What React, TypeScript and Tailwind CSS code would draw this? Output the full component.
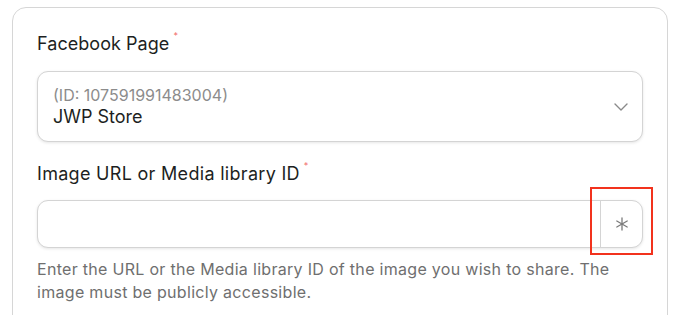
import React from "react";

const font = { fontFamily: "Inter, 'Noto Sans', sans-serif" };

const RequiredMark = () => (
  <span className="relative -top-[8px] ml-[4px] text-[9px] text-[#f26b6b]">*</span>
);

const ChevronDown = () => (
  <svg width="14" height="8" viewBox="0 0 14 8" fill="none">
    <path d="M1 1l6 6 6-6" stroke="#8a8a8a" strokeWidth="1.4" strokeLinecap="round" strokeLinejoin="round" />
  </svg>
);

const AsteriskIcon = () => (
  <svg width="14" height="14" viewBox="0 0 14 14" fill="none">
    <g stroke="#7a7a7a" strokeWidth="1.3" strokeLinecap="round">
      <path d="M7 1v12" />
      <path d="M1.8 4l10.4 6" />
      <path d="M1.8 10l10.4-6" />
    </g>
  </svg>
);

export default function App() {
  return (
    <div className="min-h-[315px] bg-white pt-[7px] pl-[12px] overflow-hidden" style={font}>
      <div className="w-[656px] rounded-[14px] border border-[#d6d6d6] bg-white px-[24px] pt-[24px] pb-10">
        {/* Facebook page select */}
        <label className="flex items-start text-[18px] leading-[24px] tracking-[0.05px] text-[#1d1f22]">
          Facebook Page
          <RequiredMark />
        </label>
        <div className="mt-[15px] flex h-[71px] items-center justify-between rounded-[11px] border border-[#d4d4d4] bg-white pl-[15px] pr-[14px] shadow-[0_1px_3px_rgba(0,0,0,0.1)]">
          <div className="flex flex-col">
            <span className="text-[16px] leading-[20px] text-[#8c8c8c]">(ID: 107591991483004)</span>
            <span className="text-[18px] leading-[23px] text-[#1d1f22]">JWP Store</span>
          </div>
          <ChevronDown />
        </div>

        {/* Image URL */}
        <label className="mt-[20px] flex items-start text-[18px] leading-[24px] tracking-[0.3px] text-[#1d1f22]">
          Image URL or Media library ID
          <RequiredMark />
        </label>
        <div className="relative mt-[14px]">
          <div className="flex h-[48px] rounded-[11px] border border-[#d4d4d4] bg-white shadow-[0_1px_3px_rgba(0,0,0,0.1)]">
            <input className="min-w-0 flex-1 bg-transparent px-[14px] text-[16px] outline-none" />
            <div className="flex w-[42px] items-center justify-center border-l border-[#d4d4d4]">
              <AsteriskIcon />
            </div>
          </div>
          <div className="absolute -top-[13px] -right-[10px] h-[68px] w-[63px] border-2 border-[#f2321d]" />
        </div>
        <p className="mt-[10px] text-[16px] leading-[23px] tracking-[0.3px] text-[#6f6f6f]">
          Enter the URL or the Media library ID of the image you wish to share. The image must be publicly accessible.
        </p>
      </div>
    </div>
  );
}
